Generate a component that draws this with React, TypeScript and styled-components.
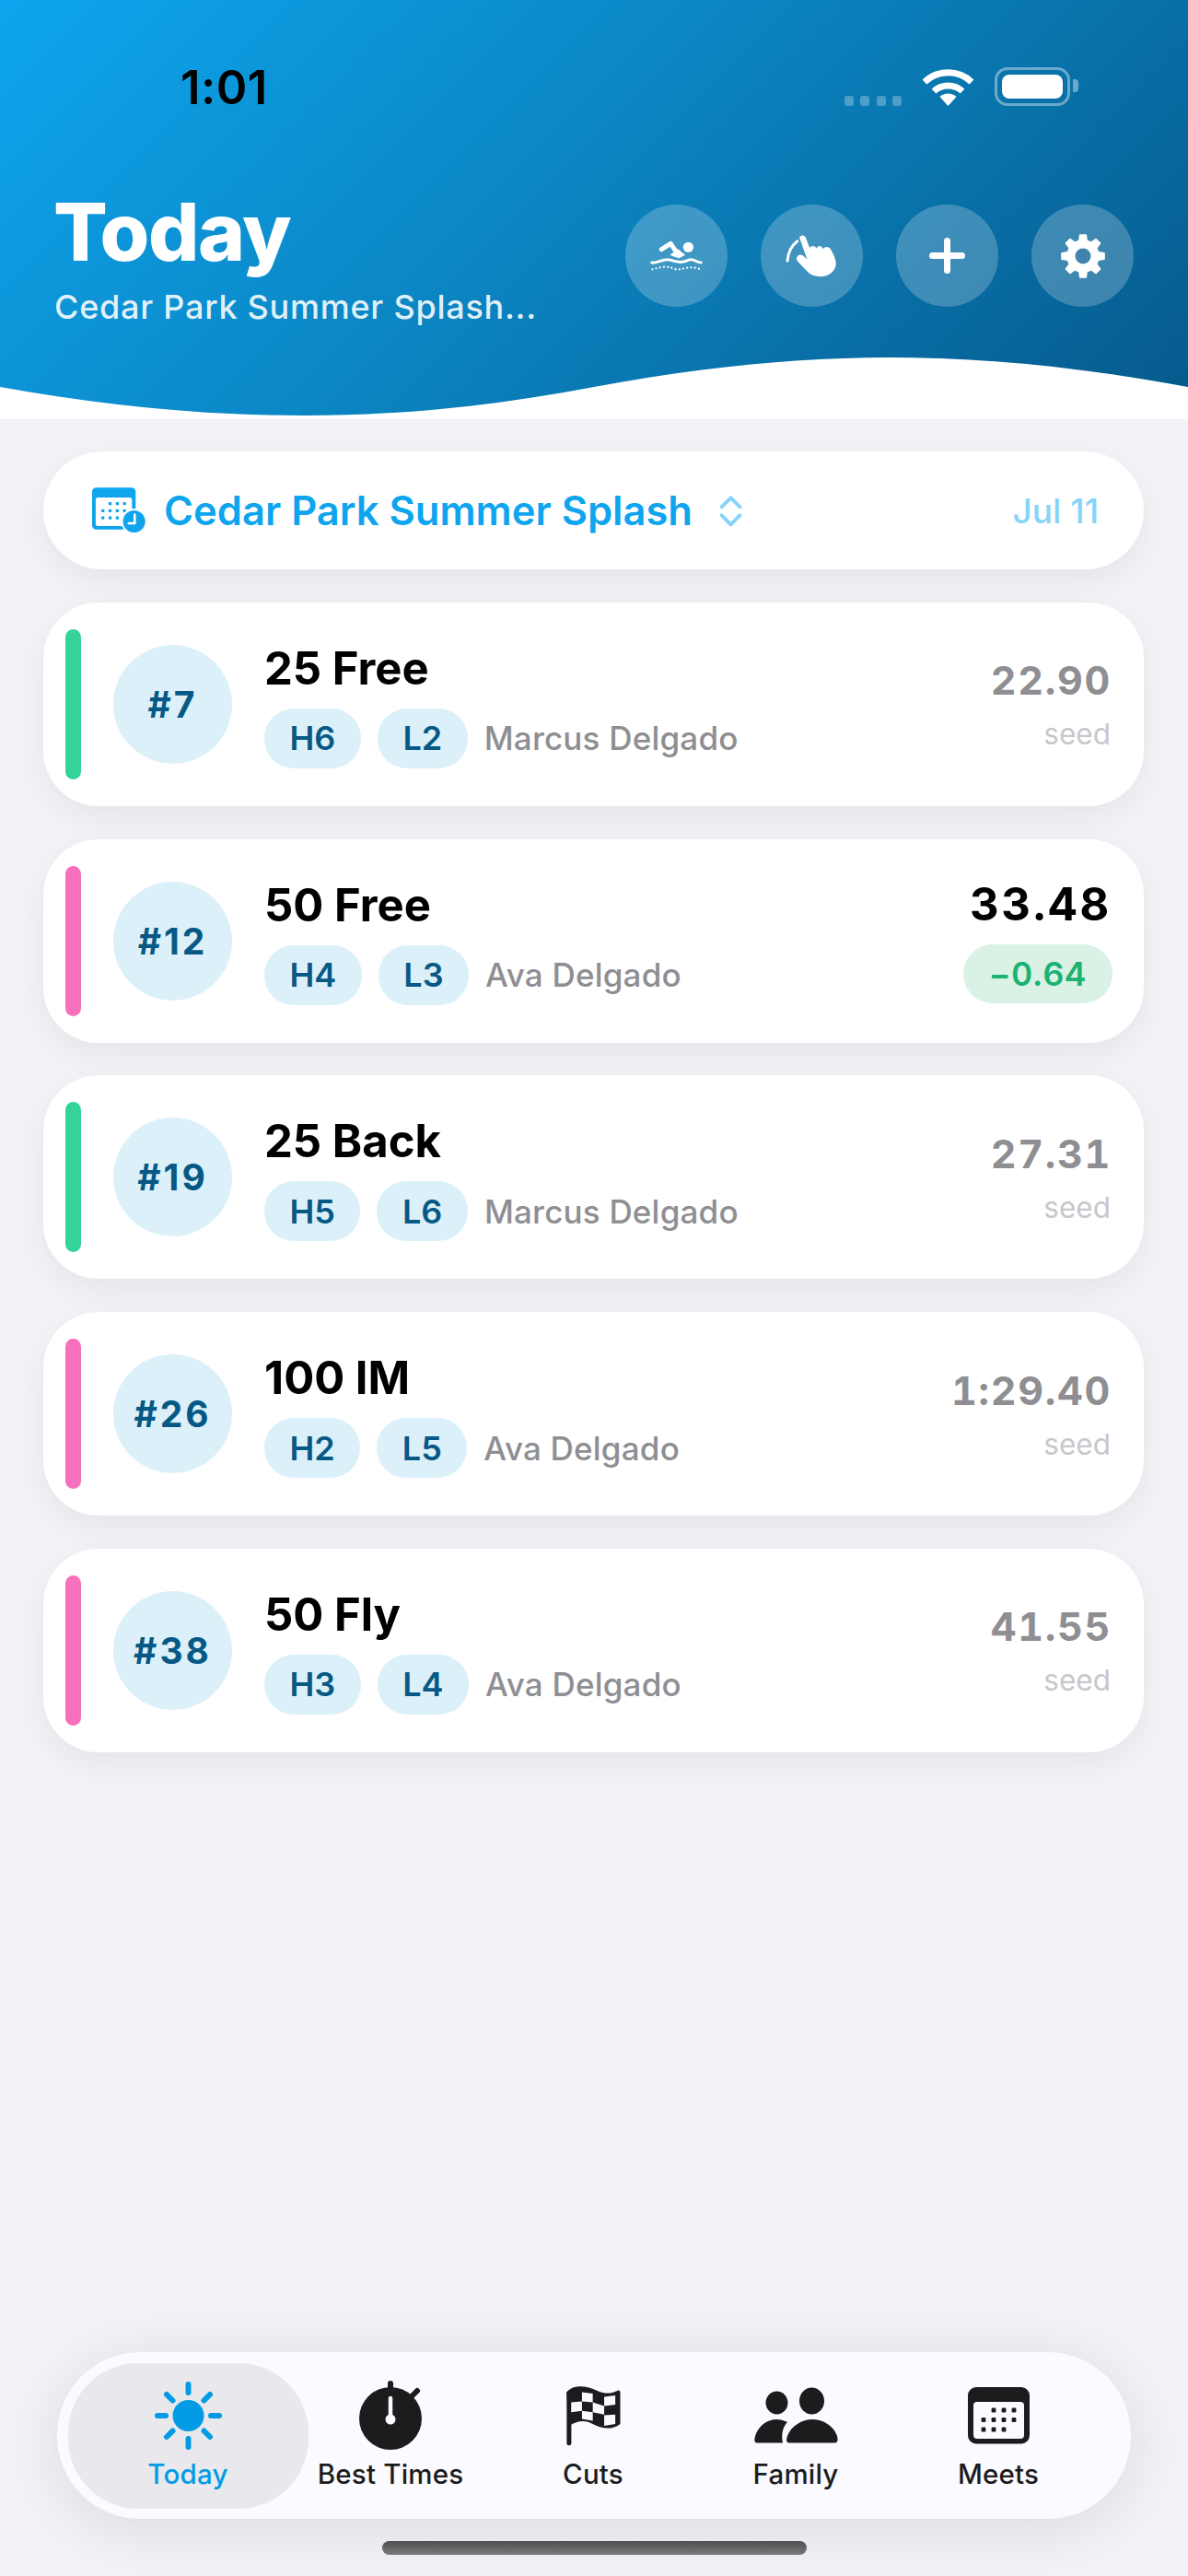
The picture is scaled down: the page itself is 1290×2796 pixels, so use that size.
import React from "react";
import styled, { createGlobalStyle } from "styled-components";

const Global = createGlobalStyle`
  html, body { margin: 0; padding: 0; width: 1290px; background: #f2f2f7; }
  * { box-sizing: border-box; }
`;

const Screen = styled.div`
  width: 1290px;
  height: 2796px;
  display: flex;
  flex-direction: column;
  background: #f2f2f7;
  font-family: Inter, "Noto Sans", sans-serif;
  overflow: hidden;
`;

const Header = styled.header`
  height: 455px;
  display: flex;
  flex-direction: column;
  background: linear-gradient(135deg, #0ea5ee 0%, #0b86c3 45%, #06598b 100%);
`;

const StatusBar = styled.div`
  height: 118px;
  display: flex;
  align-items: flex-end;
  padding: 0 128px 0 196px;
`;

const Clock = styled.span`
  font-size: 51px;
  line-height: 50px;
  font-weight: 600;
  letter-spacing: 0.4px;
  color: #000;
  margin-bottom: -2px;
`;

const StatusIcons = styled.div`
  margin-left: auto;
  display: flex;
  align-items: flex-end;
  padding-bottom: 3px;
`;

const Signal = styled.div`
  display: flex;
  gap: 7.5px;
  margin-right: 22px;
`;

const SignalDot = styled.span`
  width: 10px;
  height: 11px;
  border-radius: 3px;
  background: rgba(255, 255, 255, 0.28);
`;

const Battery = styled.div`
  width: 82px;
  height: 42px;
  margin-left: 22px;
  padding: 5px;
  border: 3px solid rgba(255, 255, 255, 0.4);
  border-radius: 14px;
  position: relative;
  &::after {
    content: "";
    position: absolute;
    right: -12px;
    top: 10px;
    width: 6px;
    height: 14px;
    border-radius: 0 4px 4px 0;
    background: rgba(255, 255, 255, 0.4);
  }
`;

const BatteryFill = styled.div`
  height: 100%;
  border-radius: 8px;
  background: #fff;
`;

const TitleRow = styled.div`
  flex: 1;
  display: flex;
  align-items: flex-start;
  justify-content: space-between;
  padding: 104px 59px 0 58px;
`;

const TitleBlock = styled.div`
  display: flex;
  flex-direction: column;
  margin-top: -18px;
`;

const Title = styled.h1`
  margin: 0;
  font-size: 87px;
  line-height: 96px;
  font-weight: 800;
  letter-spacing: -1.5px;
  color: #fff;
`;

const Subtitle = styled.p`
  margin: 11px 0 0 1px;
  font-size: 36px;
  line-height: 44px;
  font-weight: 500;
  letter-spacing: 0.75px;
  color: rgba(255, 255, 255, 0.88);
`;

const HeaderActions = styled.div`
  display: flex;
  gap: 36px;
`;

const RoundButton = styled.button`
  width: 111px;
  height: 111px;
  padding: 0;
  border: none;
  border-radius: 50%;
  background: rgba(255, 255, 255, 0.22);
  display: flex;
  align-items: center;
  justify-content: center;
`;

const Wave = styled.svg`
  display: block;
  width: 1290px;
  height: 67px;
  flex: none;
`;

const Main = styled.main`
  flex: 1;
  display: flex;
  flex-direction: column;
  gap: 35.75px;
  padding: 35px 48px 0 47px;
`;

const MeetSelector = styled.div`
  height: 128px;
  display: flex;
  align-items: center;
  padding: 0 49px 0 53px;
  background: #fff;
  border-radius: 64px;
  box-shadow: 0 12px 36px rgba(0, 0, 0, 0.06);
`;

const MeetName = styled.span`
  margin-left: 20px;
  font-size: 43.5px;
  font-weight: 600;
  color: #0ea5ee;
`;

const MeetChevron = styled.svg`
  margin-left: 29px;
  width: 25px;
  height: 35px;
`;

const MeetDate = styled.span`
  margin-left: auto;
  font-size: 37px;
  font-weight: 500;
  color: #88d4f8;
`;

const Card = styled.article`
  height: 221px;
  display: flex;
  align-items: center;
  padding: 0 34px 0 24px;
  background: #fff;
  border-radius: 60px;
  box-shadow: 0 12px 36px rgba(0, 0, 0, 0.06);
`;

const Accent = styled.div<{ $color: string }>`
  width: 17px;
  height: 163px;
  border-radius: 9px;
  background: ${(p) => p.$color};
`;

const EntryBadge = styled.div`
  width: 129px;
  height: 129px;
  margin-left: 35px;
  border-radius: 50%;
  background: #dcf0fa;
  color: #075985;
  font-size: 39px;
  font-weight: 700;
  letter-spacing: 3px;
  display: flex;
  align-items: center;
  justify-content: center;
`;

const Info = styled.div`
  margin-left: 35px;
  display: flex;
  flex-direction: column;
  gap: 15px;
  margin-top: 3px;
`;

const EventName = styled.div`
  font-size: 49px;
  line-height: 56px;
  font-weight: 650;
  color: #000;
`;

const MetaRow = styled.div`
  display: flex;
  align-items: center;
  gap: 18px;
`;

const Chip = styled.span`
  height: 65px;
  padding: 0 27.5px;
  border-radius: 32px;
  background: #dcf0fa;
  color: #075985;
  font-size: 36px;
  font-weight: 600;
  display: flex;
  align-items: center;
`;

const Swimmer = styled.span`
  font-size: 35px;
  font-weight: 500;
  letter-spacing: 0.2px;
  color: #8e8e93;
`;

const Result = styled.div`
  margin-left: auto;
  display: flex;
  flex-direction: column;
  align-items: flex-end;
  font-variant-numeric: tabular-nums;
`;

const SeedTime = styled.div`
  padding-right: 1px;
  font-size: 43px;
  line-height: 50px;
  font-weight: 700;
  letter-spacing: 1.7px;
  color: #8e8e93;
`;

const SeedLabel = styled.div`
  margin-top: 16px;
  padding-right: 2px;
  font-size: 31.5px;
  line-height: 36px;
  font-weight: 400;
  color: #c7c7cc;
`;

const FinalTime = styled.div`
  padding-right: 1px;
  font-size: 49px;
  line-height: 56px;
  font-weight: 700;
  letter-spacing: 2.8px;
  color: #000;
`;

const Delta = styled.div`
  margin-top: 15px;
  width: 162px;
  height: 64px;
  border-radius: 32px;
  background: #daf1e5;
  color: #1cb272;
  font-size: 36px;
  font-weight: 600;
  letter-spacing: 0.6px;
  display: flex;
  align-items: center;
  justify-content: center;
`;

const TabBar = styled.nav`
  height: 181px;
  margin: 0 62px;
  padding: 0 34px 0 32px;
  display: grid;
  grid-template-columns: repeat(5, 220px);
  align-items: center;
  background: #fafaff;
  border-radius: 90px;
  box-shadow: 0 10px 70px rgba(0, 0, 0, 0.1);
`;

const Tab = styled.div<{ $active?: boolean }>`
  height: 158px;
  margin: ${(p) => (p.$active ? "0 -20.5px" : "0")};
  border-radius: 76px;
  background: ${(p) => (p.$active ? "#e8e8ed" : "transparent")};
  color: ${(p) => (p.$active ? "#039be5" : "#1c1c1e")};
  display: flex;
  flex-direction: column;
  align-items: center;
`;

const TabIcon = styled.div`
  height: 90px;
  margin-top: 12px;
  display: flex;
  align-items: center;
  justify-content: center;
`;

const TabLabel = styled.span`
  font-size: 29.5px;
  line-height: 36px;
  font-weight: 500;
  letter-spacing: 0.2px;
`;

const HomeIndicator = styled.div`
  flex: none;
  width: 461px;
  height: 15px;
  margin: 24px auto 23px;
  border-radius: 8px;
  background: linear-gradient(180deg, #4f4f51, #7b7b7e);
`;

const WifiIcon = () => (
  <svg width="57" height="41" viewBox="0 0 57 41" fill="none">
    <path d="M3 15 A37 37 0 0 1 54 15" stroke="#fff" strokeWidth="7" />
    <path d="M13 25 A23 23 0 0 1 44 25" stroke="#fff" strokeWidth="7" />
    <path d="M28.5 41 L19.5 31 A13 13 0 0 1 37.5 31 Z" fill="#fff" />
  </svg>
);

const SwimIcon = () => (
  <svg width="57" height="33" viewBox="82 108 170 100" fill="none">
    <circle cx="206" cy="130" r="17" fill="#fff" />
    <path d="M118 137 L148 118 L172 154" stroke="#fff" strokeWidth="15" strokeLinecap="round" strokeLinejoin="round" />
    <path d="M146 156 L172 136 L196 156 L176 166 L156 160 Z" fill="#fff" />
    <path d="M86 181 C108 184 122 166 146 172 C165 178 185 184 208 172 C225 166 232 181 248 181" stroke="#fff" strokeWidth="9" strokeLinecap="round" />
    <path d="M88 203 C110 198 130 188 165 203 C185 208 205 186 248 204" stroke="#fff" strokeWidth="7" strokeLinecap="round" strokeDasharray="0 13" />
  </svg>
);

const TapIcon = () => (
  <svg width="57" height="47" viewBox="520 85 170 140" fill="none">
    <path d="M526 172 C528 145 540 122 558 108" stroke="#fff" strokeWidth="9" strokeLinecap="round" />
    <path
      d="M565 97 C567 86 583 87 586 98 L598 130 C604 120 617 122 620 132 C624 120 638 122 642 134 C647 124 662 124 668 138 C680 160 686 175 682 190 C676 212 650 226 625 222 C600 220 590 205 580 195 L558 172 C550 158 566 146 578 156 L590 168 Z"
      fill="#fff"
    />
  </svg>
);

const PlusIcon = () => (
  <svg width="39" height="39" viewBox="0 0 39 39" fill="none">
    <path d="M19.5 3.5 V35.5 M3.5 19.5 H35.5" stroke="#fff" strokeWidth="7" strokeLinecap="round" />
  </svg>
);

const gearPath = (() => {
  const teeth = 8;
  const pts: string[] = [];
  for (let i = 0; i < teeth; i++) {
    const a = (i * 2 * Math.PI) / teeth - Math.PI / 2;
    const step = (2 * Math.PI) / teeth;
    const list: [number, number][] = [
      [17, a - step * 0.3],
      [23, a - step * 0.17],
      [23, a + step * 0.17],
      [17, a + step * 0.3],
    ];
    list.forEach(([r, t]) => pts.push(`${(25 + r * Math.cos(t)).toFixed(2)} ${(25 + r * Math.sin(t)).toFixed(2)}`));
  }
  return "M" + pts.join(" L") + " Z M25 17 A8 8 0 1 0 25 33 A8 8 0 1 0 25 17 Z";
})();

const GearIcon = () => (
  <svg width="50" height="50" viewBox="0 0 50 50">
    <path d={gearPath} fill="#fff" fillRule="evenodd" stroke="#fff" strokeWidth="2" strokeLinejoin="round" />
    <circle cx="25" cy="25" r="8.5" fill="#4184ad" />
  </svg>
);

const MeetCalendarIcon = () => (
  <svg width="58" height="50" viewBox="28 25 178 152">
    <rect x="28" y="25" width="145" height="140" rx="14" fill="#0ea5ee" />
    <rect x="40" y="58" width="121" height="95" rx="8" fill="#fff" />
    {[
      [88, 78], [112, 78], [136, 78],
      [64, 102], [88, 102], [112, 102], [136, 102],
      [64, 126], [88, 126], [112, 126],
    ].map(([x, y]) => (
      <rect key={`${x}-${y}`} x={x - 5} y={y - 5} width="10" height="10" rx="2" fill="#0ea5ee" />
    ))}
    <circle cx="168" cy="138" r="43" fill="#fff" />
    <circle cx="168" cy="138" r="37" fill="#0ea5ee" />
    <path d="M170 115 V144 H150" fill="none" stroke="#fff" strokeWidth="8" strokeLinecap="round" strokeLinejoin="round" />
  </svg>
);

const SunIcon = () => (
  <svg width="73" height="74" viewBox="0 0 73 74" fill="none" stroke="#039be5" strokeWidth="6" strokeLinecap="round">
    <ellipse cx="36.5" cy="37" rx="17" ry="17" fill="#039be5" stroke="none" />
    <path d="M36.5 3 V12 M36.5 62 V71 M3 37 H12 M61 37 H70 M13 14 L19.5 20.5 M60 14 L53.5 20.5 M13 60 L19.5 53.5 M60 60 L53.5 53.5" />
  </svg>
);

const StopwatchIcon = () => (
  <svg width="68" height="75" viewBox="0 0 68 75">
    <rect x="31" y="0" width="6" height="14" rx="3" fill="#1c1c1e" />
    <path d="M57 17 L63 11" stroke="#1c1c1e" strokeWidth="6" strokeLinecap="round" />
    <circle cx="34" cy="41" r="34" fill="#1c1c1e" />
    <path d="M34 19 V42" stroke="#fafaff" strokeWidth="4.5" strokeLinecap="round" />
    <circle cx="34" cy="42" r="5.5" fill="#fafaff" />
  </svg>
);

const FlagIcon = () => (
  <svg width="60" height="67" viewBox="48 42 176 200">
    <path d="M58 232 V70" stroke="#1c1c1e" strokeWidth="15" strokeLinecap="round" fill="none" />
    <path
      d="M50 68 C70 42 112 44 150 63 C180 76 200 70 216 62 C222 60 224 64 224 70 L224 170 C195 192 165 186 130 168 C108 157 85 160 58 176 Z"
      fill="#1c1c1e"
    />
    <path d="M100 67 L135 72 L135 100 L100 97 Z" fill="#fafaff" />
    <path d="M172 82 L208 78 L208 108 L172 112 Z" fill="#fafaff" />
    <path d="M65 100 L100 97 L100 128 L65 132 Z" fill="#fafaff" />
    <path d="M135 100 L172 112 L172 140 L135 132 Z" fill="#fafaff" />
    <path d="M100 128 L135 132 L135 160 L100 154 Z" fill="#fafaff" />
    <path d="M172 142 L208 140 L208 170 L172 176 Z" fill="#fafaff" />
  </svg>
);

const FamilyIcon = () => (
  <svg width="91" height="62" viewBox="0 0 91 62" fill="#1c1c1e">
    <ellipse cx="24.5" cy="17" rx="12" ry="12.5" />
    <ellipse cx="62.5" cy="15" rx="13.5" ry="14.5" />
    <path d="M3 60.5 C0 60.5 0 57 1 53 C5 41 15 35 24 35 C28 35 32 36 36 38 C31 43 29 52 31 60.5 Z" />
    <path d="M38 60.5 C34 60.5 35 56 36 53 C40 42 52 35 63 35 C75 35 86 42 90 53 C91 57 91 60.5 87 60.5 Z" />
  </svg>
);

const CalendarIcon = () => (
  <svg width="67" height="62" viewBox="0 0 67 62">
    <rect x="0" y="0" width="67" height="61.5" rx="9" fill="#1c1c1e" />
    <rect x="6" y="16" width="55" height="40" rx="4" fill="#fafaff" />
    {[
      [28, 25], [39, 25], [50, 25],
      [17, 35.5], [28, 35.5], [39, 35.5], [50, 35.5],
      [17, 46], [28, 46], [39, 46],
    ].map(([x, y]) => (
      <rect key={`${x}-${y}`} x={x - 2.4} y={y - 2.4} width="4.8" height="4.8" rx="1.2" fill="#1c1c1e" />
    ))}
  </svg>
);

type Entry = {
  no: number;
  event: string;
  heat: string;
  lane: string;
  name: string;
  color: string;
  seed?: string;
  final?: string;
  delta?: string;
};

const GREEN = "#33d399";
const PINK = "#f770bd";

const entries: Entry[] = [
  { no: 7, event: "25 Free", heat: "H6", lane: "L2", name: "Marcus Delgado", color: GREEN, seed: "22.90" },
  { no: 12, event: "50 Free", heat: "H4", lane: "L3", name: "Ava Delgado", color: PINK, final: "33.48", delta: "−0.64" },
  { no: 19, event: "25 Back", heat: "H5", lane: "L6", name: "Marcus Delgado", color: GREEN, seed: "27.31" },
  { no: 26, event: "100 IM", heat: "H2", lane: "L5", name: "Ava Delgado", color: PINK, seed: "1:29.40" },
  { no: 38, event: "50 Fly", heat: "H3", lane: "L4", name: "Ava Delgado", color: PINK, seed: "41.55" },
];

const tabs = [
  { label: "Today", icon: <SunIcon />, active: true },
  { label: "Best Times", icon: <StopwatchIcon /> },
  { label: "Cuts", icon: <FlagIcon /> },
  { label: "Family", icon: <FamilyIcon /> },
  { label: "Meets", icon: <CalendarIcon /> },
];

export default function App() {
  return (
    <Screen>
      <Global />
      <Header>
        <StatusBar>
          <Clock>1:01</Clock>
          <StatusIcons>
            <Signal>
              <SignalDot />
              <SignalDot />
              <SignalDot />
              <SignalDot />
            </Signal>
            <WifiIcon />
            <Battery>
              <BatteryFill />
            </Battery>
          </StatusIcons>
        </StatusBar>
        <TitleRow>
          <TitleBlock>
            <Title>Today</Title>
            <Subtitle>Cedar Park Summer Splash...</Subtitle>
          </TitleBlock>
          <HeaderActions>
            <RoundButton><SwimIcon /></RoundButton>
            <RoundButton><TapIcon /></RoundButton>
            <RoundButton><PlusIcon /></RoundButton>
            <RoundButton><GearIcon /></RoundButton>
          </HeaderActions>
        </TitleRow>
        <Wave viewBox="0 0 1290 67" preserveAspectRatio="none">
          <path
            d="M0 32 C110 52 220 63 330 63 C440 63 540 52 645 32 C750 12 860 0 966 0 C1075 0 1180 12 1290 32 L1290 67 L0 67 Z"
            fill="#fff"
          />
        </Wave>
      </Header>
      <Main>
        <MeetSelector>
          <MeetCalendarIcon />
          <MeetName>Cedar Park Summer Splash</MeetName>
          <MeetChevron viewBox="238 112 74 106" fill="none">
            <path
              d="M245 152 L275 122 L305 152 M245 180 L275 210 L305 180"
              stroke="#88d4f8"
              strokeWidth="12"
              strokeLinecap="round"
              strokeLinejoin="round"
            />
          </MeetChevron>
          <MeetDate>Jul 11</MeetDate>
        </MeetSelector>
        {entries.map((e) => (
          <Card key={e.no}>
            <Accent $color={e.color} />
            <EntryBadge>#{e.no}</EntryBadge>
            <Info>
              <EventName>{e.event}</EventName>
              <MetaRow>
                <Chip>{e.heat}</Chip>
                <Chip>{e.lane}</Chip>
                <Swimmer>{e.name}</Swimmer>
              </MetaRow>
            </Info>
            <Result>
              {e.final ? (
                <>
                  <FinalTime>{e.final}</FinalTime>
                  <Delta>{e.delta}</Delta>
                </>
              ) : (
                <>
                  <SeedTime>{e.seed}</SeedTime>
                  <SeedLabel>seed</SeedLabel>
                </>
              )}
            </Result>
          </Card>
        ))}
      </Main>
      <TabBar>
        {tabs.map((t) => (
          <Tab key={t.label} $active={t.active}>
            <TabIcon>{t.icon}</TabIcon>
            <TabLabel>{t.label}</TabLabel>
          </Tab>
        ))}
      </TabBar>
      <HomeIndicator />
    </Screen>
  );
}
